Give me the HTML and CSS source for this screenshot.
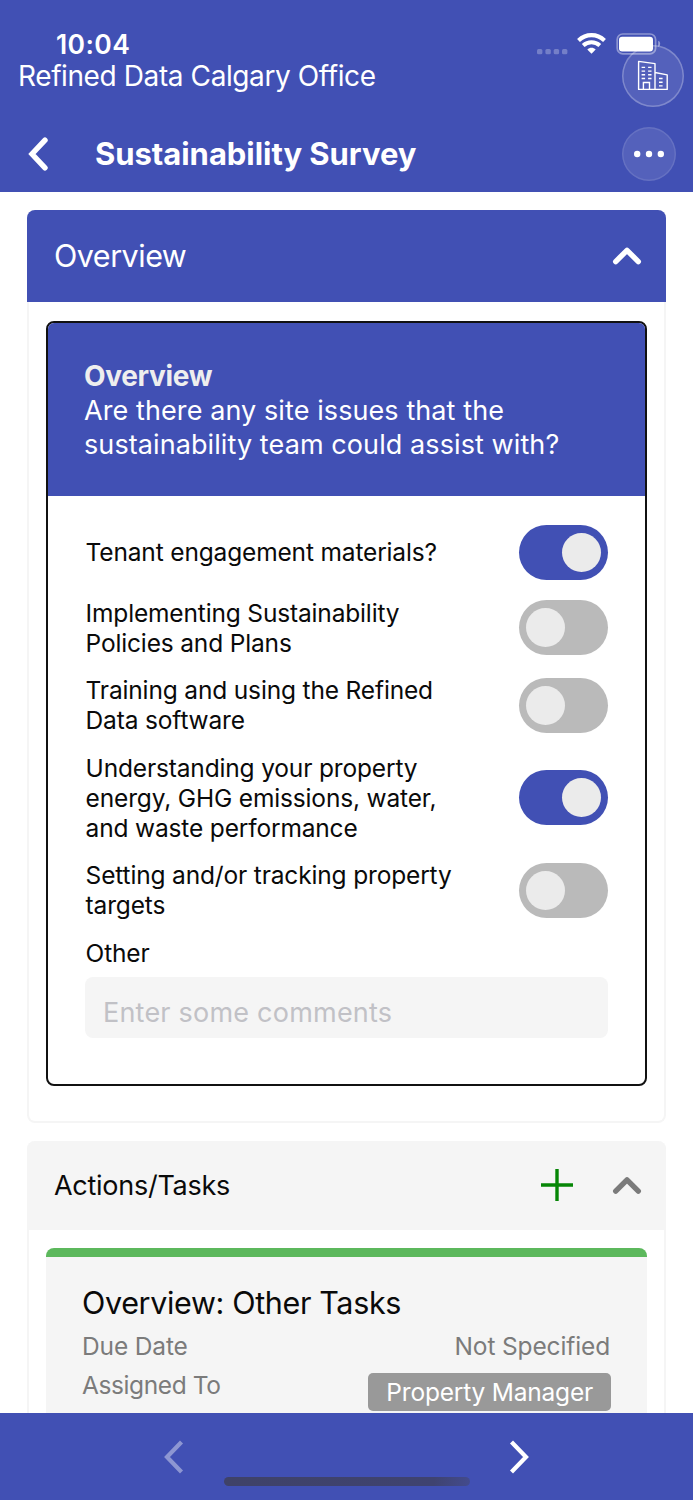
FILE: index.html
```html
<!DOCTYPE html>
<html lang="en">
  <head>
    <meta charset="UTF-8" />
    <meta name="viewport" content="width=device-width, initial-scale=1.0" />
    <title>Sustainability Survey</title>
    <link rel="stylesheet" href="styles.css">
  </head>

  <body>
    <header class="header">
      <div class="status">
        <time class="clock">10:04</time>
        <svg class="status-icons" width="126" height="24" viewBox="0 0 126 24">
          <g fill="#fff" fill-opacity="0.27">
            <rect x="1" y="17" width="5.4" height="5.2" rx="1.5" />
            <rect x="9.4" y="17" width="5.4" height="5.2" rx="1.5" />
            <rect x="17.7" y="17" width="5.4" height="5.2" rx="1.5" />
            <rect x="26" y="17" width="5.4" height="5.2" rx="1.5" />
          </g>
          <g fill="none" stroke="#fff" stroke-width="4.1">
            <path d="M42.5 8.4C50 1.3 61 1.3 68.5 8.4" />
            <path d="M47.2 13.5C52 9.2 59 9.2 63.8 13.5" />
          </g>
          <path d="M51.3 17.4C53.8 15.1 57.2 15.1 59.7 17.4L55.5 21.8Z" fill="#fff" />
          <rect x="81.2" y="2" width="38.4" height="19.8" rx="5.6" fill="none" stroke="#fff" stroke-opacity="0.4" stroke-width="1.7" />
          <rect x="83" y="4.7" width="34" height="14.8" rx="3.2" fill="#fff" />
          <path d="M122.2 8.8Q124.2 9.5 124.2 11.8T122.2 15Z" fill="#fff" fill-opacity="0.45" />
        </svg>
      </div>
      <div class="site">
        <span>Refined Data Calgary Office</span>
        <button type="button" class="round site-btn" aria-label="Site">
          <svg width="62" height="62" viewBox="0 0 62 62" fill="none" stroke="#fff" stroke-width="1.4">
            <path d="M16.6 44.4V16.4L33 18.6V44.4ZM33 27.5L45.2 29.9V44.4H33" stroke-linejoin="round" />
            <path d="M21.4 44.4V37.5H27.5V44.4" />
            <path d="M19.6 22.4h3.5m3 0H29.5M19.6 26.1h3.5m3 0H29.5M19.6 29.8h3.5m3 0H29.5M19.6 33.5h3.5m3 0H29.5M37 33.5h3.6M37 37.2h3.6M37 40.9h3.6" />
          </svg>
        </button>
      </div>
      <div class="title-bar">
        <svg width="20" height="34" viewBox="0 0 20 34">
          <path d="M17 3.2L4 17L17 30.8" fill="none" stroke="#fff" stroke-width="5.4" stroke-linecap="round" />
        </svg>
        <h1>Sustainability Survey</h1>
        <button type="button" class="round more-btn" aria-label="More">
          <svg width="32" height="8" viewBox="0 0 32 8" fill="#fff">
            <circle cx="4.2" cy="4" r="3.2" />
            <circle cx="16" cy="4" r="3.2" />
            <circle cx="27.8" cy="4" r="3.2" />
          </svg>
        </button>
      </div>
    </header>

    <main class="content">
      <section class="panel">
        <div class="panel-head panel-head-active">
          <h2>Overview</h2>
          <svg width="30" height="20" viewBox="0 0 30 20">
            <path d="M3.7 15.6L15 4.3L26.3 15.6" fill="none" stroke="#fff" stroke-width="5.4" stroke-linecap="round" stroke-linejoin="round" />
          </svg>
        </div>
        <div class="card">
          <div class="card-head">
            <h3>Overview</h3>
            <p>Are there any site issues that the sustainability team could assist with?</p>
          </div>
          <form class="questions">
            <label class="question">
              <span>Tenant engagement materials?</span>
              <i class="toggle on"></i>
            </label>
            <label class="question">
              <span>Implementing Sustainability Policies and Plans</span>
              <i class="toggle"></i>
            </label>
            <label class="question">
              <span>Training and using the Refined Data software</span>
              <i class="toggle"></i>
            </label>
            <label class="question">
              <span>Understanding your property energy, GHG emissions, water, and waste performance</span>
              <i class="toggle on"></i>
            </label>
            <label class="question">
              <span>Setting and/or tracking property targets</span>
              <i class="toggle"></i>
            </label>
            <label class="other" for="comments">Other</label>
            <input type="text" id="comments" class="comments" placeholder="Enter some comments" />
          </form>
        </div>
      </section>

      <section class="panel">
        <div class="panel-head">
          <h2>Actions/Tasks</h2>
          <svg class="add" width="32" height="32" viewBox="0 0 32 32">
            <path d="M16 0V32M0 16H32" stroke="#068606" stroke-width="3.4" />
          </svg>
          <svg width="30" height="20" viewBox="0 0 30 20">
            <path d="M3.7 15.1L15 3.8L26.3 15.1" fill="none" stroke="#7b7b7b" stroke-width="5.4" stroke-linecap="round" stroke-linejoin="round" />
          </svg>
        </div>
        <div class="task">
          <h3>Overview: Other Tasks</h3>
          <div class="task-row">
            <span>Due Date</span>
            <span>Not Specified</span>
          </div>
          <div class="task-row">
            <span class="assigned">Assigned To</span>
            <span class="badge">Property Manager</span>
          </div>
        </div>
      </section>
    </main>

    <footer class="footer">
      <nav>
        <svg class="disabled" width="20" height="34" viewBox="0 0 20 34">
          <path d="M17.5 2L3 17L17.5 32" fill="none" stroke="#fff" stroke-width="4.2" />
        </svg>
        <svg width="20" height="34" viewBox="0 0 20 34">
          <path d="M2.5 2L17 17L2.5 32" fill="none" stroke="#fff" stroke-width="4.2" />
        </svg>
      </nav>
      <div class="home-indicator"></div>
    </footer>
  </body>
</html>
```
FILE: styles.css
```css
* {
  box-sizing: border-box;
}

body {
  display: flex;
  flex-direction: column;
  height: 1500px;
  margin: 0;
  overflow: hidden;
  background: #fff;
  color: #0a0a0a;
  font-family: Inter, "Liberation Sans", sans-serif;
}

h1,
h2,
h3,
p {
  margin: 0;
  font-weight: 400;
}

svg {
  display: block;
  flex: none;
}

/* header */

.header {
  flex: none;
  height: 192px;
  background: #4150b4;
  color: #fff;
}

.status {
  display: flex;
  justify-content: space-between;
  height: 60px;
  padding: 29px 31px 0 56px;
}

.clock {
  font-size: 26.5px;
  font-weight: 600;
  line-height: 31px;
  letter-spacing: 0.4px;
}

.status-icons {
  margin-top: 3px;
}

.site {
  display: flex;
  align-items: center;
  justify-content: space-between;
  height: 62px;
  margin-top: -15px;
  padding: 0 9px 0 18px;
  font-size: 28px;
  letter-spacing: -0.4px;
}

.round {
  display: flex;
  align-items: center;
  justify-content: center;
  padding: 0;
  border: 0;
  border-radius: 50%;
  background: rgba(255, 255, 255, 0.1);
  box-shadow: inset 0 0 0 1.5px rgba(255, 255, 255, 0.25);
}

.site-btn {
  width: 62px;
  height: 62px;
}

.more-btn {
  width: 54px;
  height: 54px;
  margin-left: auto;
  box-shadow: inset 0 0 0 1.5px rgba(255, 255, 255, 0.1);
}

.title-bar {
  display: flex;
  align-items: center;
  height: 54px;
  margin-top: 20px;
  padding: 0 17px 0 28px;
}

.title-bar h1 {
  margin: -1px 0 0 47px;
  font-size: 31px;
  font-weight: 700;
  letter-spacing: -0.04px;
}

/* panels */

.content {
  flex: 1;
  min-height: 0;
  overflow: hidden;
  padding: 18px 27px 0;
}

.panel {
  margin-bottom: 18px;
  border: solid #f5f5f5;
  border-width: 0 2px 2px;
  border-radius: 8px;
}

.panel-head {
  display: flex;
  align-items: center;
  height: 89px;
  margin: 0 -2px;
  padding: 0 24px 0 27px;
  border-radius: 8px 8px 0 0;
  background: #f5f5f5;
}

.panel-head h2 {
  flex: 1;
  font-size: 27px;
  letter-spacing: -0.27px;
}

.panel-head-active {
  height: 91.5px;
  background: #4150b4;
  color: #fff;
}

.panel-head-active h2 {
  font-size: 30.5px;
  letter-spacing: -0.5px;
}

.add {
  margin: -1px 39.5px 0 0;
}

/* survey card */

.card {
  height: 765px;
  margin: 19.5px 17px 35px;
  border: 2px solid #111;
  border-radius: 8px;
}

.card-head {
  height: 173px;
  padding: 35.5px 36px 0;
  border-radius: 6px 6px 0 0;
  background: #4150b4;
  color: #fff;
  line-height: 34px;
}

.card-head h3 {
  margin-bottom: 1px;
  color: #eee;
  font-size: 28px;
  font-weight: 700;
  letter-spacing: -0.34px;
}

.card-head p {
  font-size: 27px;
  letter-spacing: 0.09px;
}

.questions {
  display: flex;
  flex-direction: column;
  gap: 17.5px;
  padding: 29px 37.5px 0 37px;
  font-size: 24.5px;
  line-height: 30px;
  letter-spacing: -0.16px;
}

.question {
  display: flex;
  align-items: center;
  justify-content: space-between;
}

.question span {
  width: 375px;
  padding-left: 0.6px;
}

.question:first-child span {
  margin-top: -2px;
}

.other {
  padding-left: 0.6px;
}

.toggle {
  width: 89px;
  height: 55px;
  padding: 8px 7px;
  border-radius: 28px;
  background: #bababa;
}

.toggle::before {
  content: "";
  display: block;
  width: 39px;
  height: 39px;
  border-radius: 50%;
  background: #ebebeb;
}

.toggle.on {
  background: #4150b4;
}

.toggle.on::before {
  margin-left: auto;
}

.comments {
  height: 61px;
  margin-top: -8px;
  padding: 9px 18px 0;
  border: 0;
  border-radius: 8px;
  background: #f5f5f5;
  font: 27px Inter, "Liberation Sans", sans-serif;
  letter-spacing: 0.22px;
}

.comments::placeholder {
  color: #c1c1c6;
}

/* tasks */

.task {
  height: 300px;
  margin: 18px 17px;
  padding: 27px 37px 0 36px;
  border-top: 9px solid #5cb85c;
  border-radius: 8px 8px 0 0;
  background: #f5f5f5;
  color: #7b7b7b;
  font-size: 24.5px;
  letter-spacing: -0.14px;
}

.task h3 {
  margin-bottom: 6px;
  color: #0a0a0a;
  font-size: 30.5px;
  line-height: 37px;
  letter-spacing: -0.35px;
}

.task-row {
  display: flex;
  justify-content: space-between;
  line-height: 38px;
}

.task-row + .task-row {
  margin-top: 8px;
}

.assigned {
  margin-top: -7.5px;
  letter-spacing: -0.4px;
}

.badge {
  height: 38px;
  margin-right: -1px;
  padding: 0 18px;
  border-radius: 5px;
  background: #999;
  color: #fff;
  letter-spacing: -0.2px;
}

/* footer */

.footer {
  flex: none;
  height: 87.5px;
  padding-top: 27px;
  background: #4150b4;
}

.footer nav {
  display: flex;
  justify-content: space-between;
  padding: 0 164px;
}

.disabled {
  opacity: 0.4;
}

.home-indicator {
  width: 246px;
  height: 9px;
  margin: 3px auto 0;
  border-radius: 5px;
  background: linear-gradient(100deg, #3f4268, #3f4370 85%, #434b8e);
}
```
